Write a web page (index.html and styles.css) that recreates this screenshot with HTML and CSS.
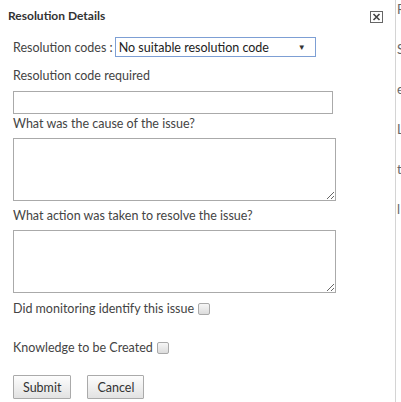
FILE: index.html
```html
<!DOCTYPE html>
<html lang="en">
<head>
    <meta charset="UTF-8">
    <title>Resolution Details</title>
    <link rel="stylesheet" href="styles.css">
</head>
<body>

<div class="dialog">
    <div class="dialog-header">
        <h1>Resolution Details</h1>
        <svg class="close-icon" width="13" height="12" viewBox="0 0 13 12">
            <rect x="0.5" y="0.5" width="12" height="11" fill="#fff" stroke="#666"/>
            <path d="M3.5 3 L9.5 9 M9.5 3 L3.5 9" stroke="#444" stroke-width="1.6"/>
        </svg>
    </div>

    <form class="dialog-body">
        <div class="row select-row">
            <label>Resolution codes :</label>
            <div class="fake-select">
                <span>No suitable resolution code</span>
                <span class="arrow">&#9660;</span>
            </div>
        </div>

        <label class="field-label first">Resolution code required</label>
        <input type="text" class="text-input">

        <label class="field-label after-input">What was the cause of the issue?</label>
        <textarea class="area"></textarea>

        <label class="field-label">What action was taken to resolve the issue?</label>
        <textarea class="area"></textarea>

        <div class="row check-row">
            <label>Did monitoring identify this issue</label>
            <input type="checkbox">
        </div>

        <div class="row check-row">
            <label>Knowledge to be Created</label>
            <input type="checkbox">
        </div>

        <div class="buttons">
            <button type="button">Submit</button>
            <button type="button">Cancel</button>
        </div>
    </form>
</div>

<!-- page derriere le dialogue -->
<div class="behind">
    <p>R</p>
    <p>S</p>
    <p>e</p>
    <p>L</p>
    <p>t</p>
    <p>l</p>
</div>

</body>
</html>
```

FILE: styles.css
```css
body {
    margin: 0;
    width: 401px;
    height: 402px;
    overflow: hidden;
    display: flex;
    font-family: Lato, "Liberation Sans", sans-serif;
    font-size: 12.5px;
    color: #444;
    background-color: #fff;
}
.dialog {
    width: 395px;
    flex-shrink: 0;
}
.dialog-header {
    display: flex;
    justify-content: space-between;
    align-items: center;
    padding: 7px 12px 0 8px;
    height: 16px;
}
.dialog-header h1 {
    margin: 0;
    font-size: 12px;
    font-weight: bold;
    color: #333;
}
.close-icon {
    margin-top: 4px;
}
.dialog-body {
    padding: 0 0 0 13px;
}
.row {
    display: flex;
    align-items: center;
}
.select-row {
    margin-top: 14px;
    height: 20px;
}
.fake-select {
    display: flex;
    justify-content: space-between;
    align-items: center;
    width: 187px;
    height: 18px;
    margin-left: 2px;
    padding: 0 9px 0 3px;
    border: 1px solid #7d9fd4;
    color: #222;
}
.fake-select .arrow {
    font-size: 8px;
    color: #333;
}
.field-label {
    display: block;
    height: 14px;
    line-height: 14px;
    margin-top: 8px;
}
.field-label.first {
    margin-top: 12px;
}
.field-label.after-input {
    margin-top: 3px;
}
.text-input {
    display: block;
    box-sizing: border-box;
    width: 320px;
    height: 23px;
    margin: 8px 0 0;
    border: 1px solid #aaa;
}
.area {
    display: block;
    box-sizing: border-box;
    width: 323px;
    height: 63px;
    margin: 7px 0 0;
    border: 1px solid #aaa;
    resize: both;
}
.check-row {
    height: 16px;
    margin-top: 7px;
}
.check-row + .check-row {
    margin-top: 23px;
}
.check-row input {
    appearance: none;
    box-sizing: border-box;
    margin: 1px 0 0 4px;
    width: 12px;
    height: 12px;
    border: 1px solid #a9a9a9;
    border-radius: 2px;
    background: linear-gradient(#f6f6f6, #dcdcdc);
}
.buttons {
    display: flex;
    gap: 16px;
    margin-top: 20px;
}
.buttons button {
    font-family: inherit;
    font-size: 12.5px;
    color: #333;
    height: 24px;
    padding: 0 9px;
    border: 1px solid #aaa;
    border-radius: 1px;
    background: linear-gradient(#fdfdfd, #e2e2e2);
}
.behind {
    flex: 1;
    border-left: 1px solid #d4d4d4;
    padding-left: 1px;
    padding-top: 1px;
    font-size: 13px;
    color: #666;
    overflow: hidden;
}
.behind p {
    margin: 0;
    height: 40px;
    line-height: 16px;
}
```
